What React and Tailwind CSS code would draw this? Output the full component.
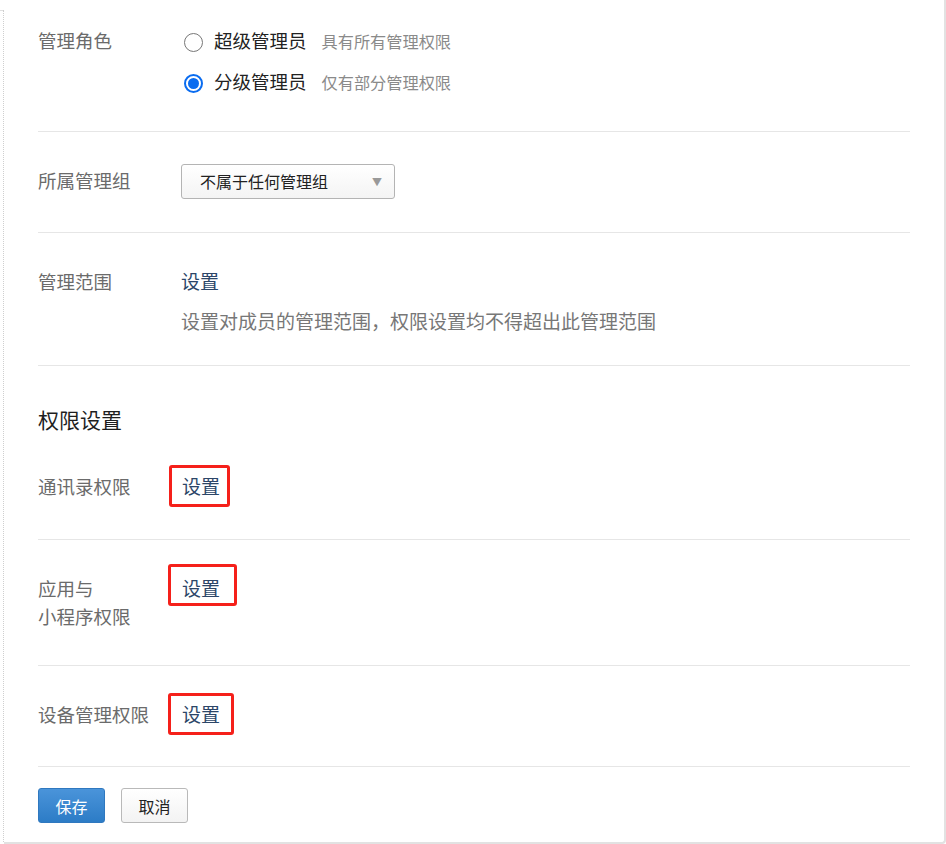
import React, { useState } from "react";

const font = { fontFamily: '"Noto Sans CJK SC", "Noto Sans", sans-serif' };

// labels sit in a fixed column so every control starts at the same x
const Label = ({ children, className = "" }) => (
    <div className={`w-[143px] shrink-0 text-[18.5px] leading-[28px] text-[#6b6b6b] ${className}`}>
        {children}
    </div>
);

const Radio = ({ checked, onClick, title, desc }) => (
    <div className="flex items-center h-[28px] cursor-pointer" onClick={onClick}>
        <span
            className={`ml-[3px] mt-[2px] w-[19px] h-[19px] rounded-full flex items-center justify-center bg-white ${
                checked ? "border-2 border-[#0a6cf0]" : "border border-[#777]"
            }`}
        >
            {checked && <span className="w-[11px] h-[11px] rounded-full bg-[#0a6cf0]" />}
        </span>
        <span className="ml-[11px] text-[18.5px] text-[#222]">{title}</span>
        <span className="ml-[15px] text-[16.2px] text-[#8a8a8a]">{desc}</span>
    </div>
);

// "设置" link; the red frame is drawn over it
const SetLink = ({ box }) => (
    <span className="relative self-start inline-block ml-[1px] text-[19px] leading-[28px] text-[#2c4668]">
        设置
        {box && (
            <span
                className={`absolute border-[3px] border-[#f5201a] rounded-[3px] pointer-events-none ${box}`}
            />
        )}
    </span>
);

const Divider = () => <div className="border-t border-[#e6e6e6]" />;

export default function App() {
    const [role, setRole] = useState("sub");

    return (
        <div className="w-[946px] h-[844px] bg-white flex" style={font}>
            <div className="w-[3px] shrink-0 mt-[10px] border-t border-[#e0e0e0]" />
            <div className="w-[1px] shrink-0 mt-[10px] mb-[2px] border-l border-dotted border-[#cfcfcf]" />
            <div className="flex-1 border-r-2 border-[#e2e2e2] border-b-2 rounded-br-[4px] pl-[34px] pr-[34px]">
                {/* role */}
                <div className="flex pt-[27px] pb-[35px]">
                    <Label className="-mt-[1px]">管理角色</Label>
                    <div className="flex flex-col gap-[13px]">
                        <Radio
                            checked={role === "super"}
                            onClick={() => setRole("super")}
                            title="超级管理员"
                            desc="具有所有管理权限"
                        />
                        <Radio
                            checked={role === "sub"}
                            onClick={() => setRole("sub")}
                            title="分级管理员"
                            desc="仅有部分管理权限"
                        />
                    </div>
                </div>
                <Divider />

                {/* group */}
                <div className="flex items-center pt-[32px] pb-[33px]">
                    <Label className="mb-[4px]">所属管理组</Label>
                    <div className="w-[214px] h-[35px] border border-[#b4b4b4] rounded-[3px] bg-gradient-to-b from-white to-[#f4f4f4] flex items-center justify-between pl-[18px] pr-[12px]">
                        <span className="text-[16px] text-[#222] mb-[2px]">不属于任何管理组</span>
                        <span className="text-[10px] text-[#999]">▼</span>
                    </div>
                </div>
                <Divider />

                {/* scope */}
                <div className="flex pt-[34px] pb-[30px]">
                    <Label>管理范围</Label>
                    <div className="flex flex-col gap-[12px]">
                        <div className="text-[19px] leading-[28px] text-[#2c4668]">设置</div>
                        <div className="text-[19px] leading-[28px] text-[#777]">
                            设置对成员的管理范围，权限设置均不得超出此管理范围
                        </div>
                    </div>
                </div>
                <Divider />

                {/* permissions */}
                <div className="pt-[39px] text-[21px] leading-[28px] text-[#1f1f1f]">权限设置</div>
                <div className="flex pt-[39px] pb-[39px]">
                    <Label>通讯录权限</Label>
                    <SetLink box="-left-[13px] -right-[10px] -top-[7px] -bottom-[7px]" />
                </div>
                <Divider />

                <div className="flex pt-[34px] pb-[35px]">
                    <Label>
                        应用与
                        <br />
                        小程序权限
                    </Label>
                    <SetLink box="-left-[14px] -right-[17px] -top-[10px] -bottom-[4px]" />
                </div>
                <Divider />

                <div className="flex pt-[34px] pb-[38px]">
                    <Label>设备管理权限</Label>
                    <SetLink box="-left-[14px] -right-[14px] -top-[7px] -bottom-[7px]" />
                </div>
                <Divider />

                <div className="flex gap-[16px] pt-[21px]">
                    <button className="w-[67px] h-[35px] rounded-[3px] border border-[#2f78bf] bg-gradient-to-b from-[#4a94da] to-[#2c7cc6] text-white text-[16px]">
                        保存
                    </button>
                    <button className="w-[67px] h-[35px] rounded-[3px] border border-[#b9b9b9] bg-gradient-to-b from-white to-[#f3f3f3] text-[#222] text-[16px]">
                        取消
                    </button>
                </div>
            </div>
        </div>
    );
}
